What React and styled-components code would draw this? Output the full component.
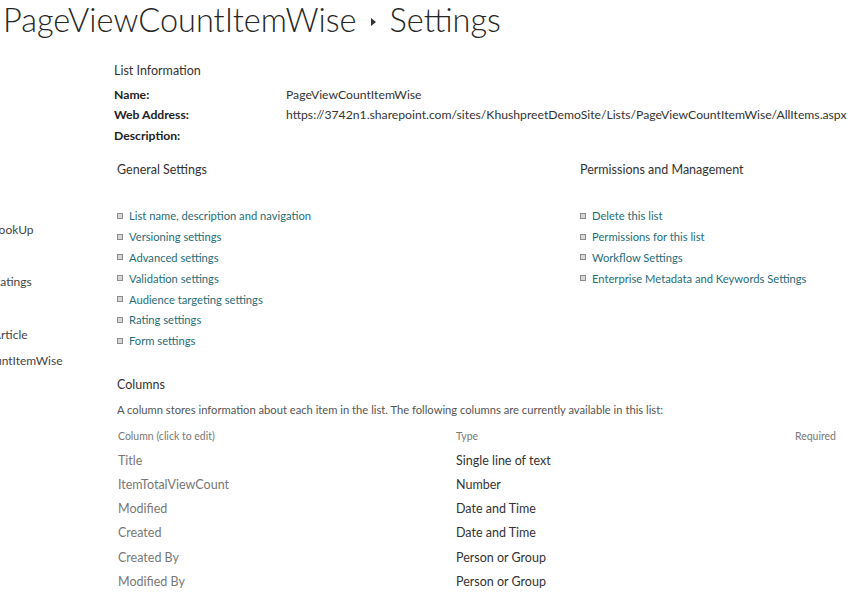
import React from 'react';
import styled, { createGlobalStyle } from 'styled-components';

const Global = createGlobalStyle`
  html, body {
    margin: 0;
    padding: 0;
    background: #fff;
    overflow: hidden;
  }
  body {
    font-family: Lato, "Open Sans", "Noto Sans", sans-serif;
    color: #333;
  }
`;

const Root = styled.div`
  width: 850px;
  height: 595px;
  overflow: hidden;
`;

const Title = styled.h1`
  margin: 0;
  padding: 0 0 0 3px;
  height: 39px;
  font-weight: 300;
  font-size: 32.5px;
  line-height: 39px;
  color: #262626;
  white-space: nowrap;
  display: flex;
  align-items: center;
  gap: 14px;
`;

const Caret = styled.span`
  display: inline-block;
  width: 0;
  height: 0;
  border-top: 4px solid transparent;
  border-bottom: 4px solid transparent;
  border-left: 5px solid #333;
  margin-top: 5px;
`;

const Body = styled.div`
  display: flex;
`;

const Nav = styled.nav`
  width: 185px;
  margin-left: -71px;
  flex: none;
  display: flex;
  flex-direction: column;
  padding-top: 182px;
`;

const NavItem = styled.div`
  font-size: 12px;
  line-height: 18px;
  color: #444;
  white-space: nowrap;
  margin-bottom: ${p => p.gap}px;
`;

const Main = styled.main`
  flex: 1;
  min-width: 0;
  padding-top: 23px;
`;

const InfoHeading = styled.div`
  font-size: 12.5px;
  color: #333;
  line-height: 18px;
  margin-bottom: 4px;
`;

const InfoGrid = styled.div`
  display: grid;
  grid-template-columns: 172px 1fr;
  grid-auto-rows: 20.5px;
  align-items: center;
  font-size: 12.2px;
  white-space: nowrap;
`;

const Label = styled.div`
  font-weight: 700;
  color: #222;
`;

const Value = styled.div`
  color: #333;
`;

const Sections = styled.div`
  display: grid;
  grid-template-columns: 463px 1fr;
  padding-left: 3px;
  margin-top: 15px;
`;

const SectionTitle = styled.div`
  font-size: 12.5px;
  line-height: 18px;
  color: #333;
  margin-bottom: 27px;
`;

const LinkList = styled.ul`
  list-style: none;
  margin: 0;
  padding: 0;
`;

const LinkItem = styled.li`
  display: flex;
  align-items: center;
  height: 20.8px;
  font-size: 11.2px;
  color: #1f6d78;
  white-space: nowrap;
  &::before {
    content: '';
    width: 4px;
    height: 4px;
    border: 1px solid #8c8c8c;
    background: #d8d8d8;
    margin-right: 6px;
    flex: none;
  }
`;

const ColumnsBlock = styled.div`
  padding-left: 3px;
  margin-top: 25px;
`;

const ColumnsTitle = styled.div`
  font-size: 12.5px;
  line-height: 18px;
  color: #333;
`;

const ColumnsDesc = styled.div`
  font-size: 11.2px;
  line-height: 14px;
  color: #555;
  margin-top: 9px;
  white-space: nowrap;
`;

const Table = styled.div`
  display: grid;
  grid-template-columns: 338px 1fr auto;
  grid-auto-rows: 24.2px;
  align-items: center;
  padding-left: 1px;
  padding-right: 14px;
  margin-top: 7px;
  white-space: nowrap;
`;

const HeadCell = styled.div`
  font-size: 10.5px;
  color: #777;
`;

const NameCell = styled.div`
  font-size: 12.5px;
  color: #777;
`;

const TypeCell = styled.div`
  font-size: 12.5px;
  color: #333;
`;

const general = [
  'List name, description and navigation',
  'Versioning settings',
  'Advanced settings',
  'Validation settings',
  'Audience targeting settings',
  'Rating settings',
  'Form settings',
];

const perms = [
  'Delete this list',
  'Permissions for this list',
  'Workflow Settings',
  'Enterprise Metadata and Keywords Settings',
];

const columns = [
  ['Title', 'Single line of text'],
  ['ItemTotalViewCount', 'Number'],
  ['Modified', 'Date and Time'],
  ['Created', 'Date and Time'],
  ['Created By', 'Person or Group'],
  ['Modified By', 'Person or Group'],
];

const nav = [
  { text: 'DepartmentLookUp', gap: 34 },
  { text: 'DepartmentRatings', gap: 35 },
  { text: 'DepartmentArticle', gap: 8 },
  { text: 'PageViewCountItemWise', gap: 0 },
];

export default function App() {
  return (
    <Root>
      <Global />
      <Title>
        <span>PageViewCountItemWise</span>
        <Caret />
        <span>Settings</span>
      </Title>
      <Body>
        <Nav>
          {nav.map((n, i) => (
            <NavItem key={i} gap={n.gap}>{n.text}</NavItem>
          ))}
        </Nav>
        <Main>
          <InfoHeading>List Information</InfoHeading>
          <InfoGrid>
            <Label>Name:</Label>
            <Value>PageViewCountItemWise</Value>
            <Label>Web Address:</Label>
            <Value>https://3742n1.sharepoint.com/sites/KhushpreetDemoSite/Lists/PageViewCountItemWise/AllItems.aspx</Value>
            <Label>Description:</Label>
            <Value />
          </InfoGrid>

          <Sections>
            <div>
              <SectionTitle>General Settings</SectionTitle>
              <LinkList>
                {general.map((g, i) => <LinkItem key={i}>{g}</LinkItem>)}
              </LinkList>
            </div>
            <div>
              <SectionTitle>Permissions and Management</SectionTitle>
              <LinkList>
                {perms.map((p, i) => <LinkItem key={i}>{p}</LinkItem>)}
              </LinkList>
            </div>
          </Sections>

          <ColumnsBlock>
            <ColumnsTitle>Columns</ColumnsTitle>
            <ColumnsDesc>
              A column stores information about each item in the list. The following columns are currently available in this list:
            </ColumnsDesc>
            <Table>
              <HeadCell>Column (click to edit)</HeadCell>
              <HeadCell>Type</HeadCell>
              <HeadCell>Required</HeadCell>
              {columns.map(([name, type], i) => (
                <React.Fragment key={i}>
                  <NameCell>{name}</NameCell>
                  <TypeCell>{type}</TypeCell>
                  <div />
                </React.Fragment>
              ))}
            </Table>
          </ColumnsBlock>
        </Main>
      </Body>
    </Root>
  );
}
